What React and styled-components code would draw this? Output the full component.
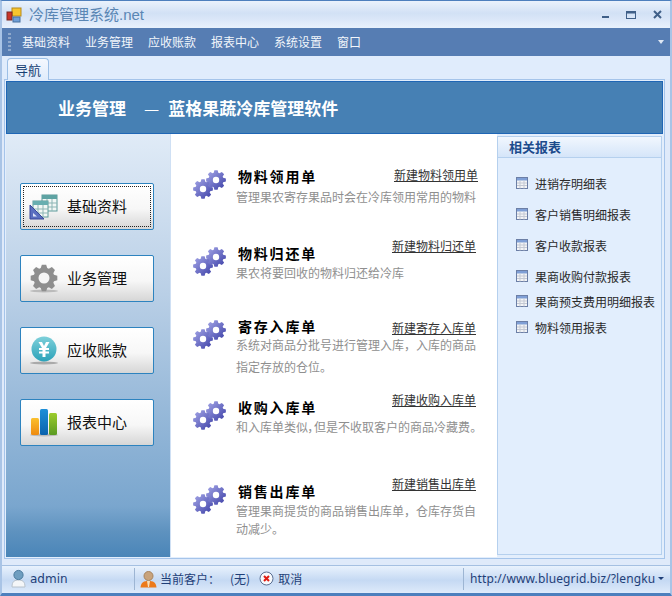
import React from "react";
import styled, { createGlobalStyle } from "styled-components";

const CJK = `"Noto Sans CJK SC", "Liberation Sans", sans-serif`;

const Global = createGlobalStyle`
  html, body { margin: 0; padding: 0; }
  body { width: 672px; height: 596px; overflow: hidden; font-family: ${CJK}; font-size: 12px; }
  * { box-sizing: border-box; }
`;

const Win = styled.div`
  width: 672px; height: 596px; display: flex; flex-direction: column;
  background: #dfeafa; border: 2px solid #4d7fbd; border-top-width: 1px; border-bottom-width: 3px;
  border-color: #4d7fbd #a9c4e6 #4d7fbd #a9c4e6;
`;
const TitleBar = styled.div`
  height: 27px; flex: none; display: flex; align-items: center; padding: 0 8px 0 4px;
  background: linear-gradient(#eaf2fc, #d2e1f5 45%, #dbe7f8 70%, #e8f1fc);
`;
const AppTitle = styled.div`
  margin-left: 7px; font-size: 15px; line-height: 26px; color: #5a86b4; flex: 1; white-space: nowrap;
  & span { font-family: "Liberation Sans", sans-serif; font-size: 15px; }
`;
const WinButtons = styled.div`display: flex; align-items: center; gap: 17px; color: #3f5f88;`;
const MenuBar = styled.div`
  height: 28px; flex: none; display: flex; align-items: center; padding: 0 6px 1px 6px;
  background: #567db3; color: #f2f6fb;
`;
const Grip = styled.div`
  width: 3px; height: 18px; margin-right: 11px; flex: none;
  background: repeating-linear-gradient(#8fa9cc 0 2px, transparent 2px 4px);
`;
const MenuItem = styled.div`margin-right: 15px; font-size: 12px; white-space: nowrap;`;
const MenuArrow = styled.div`
  margin-left: auto; width: 0; height: 0; border: 3px solid transparent; border-top: 4px solid #dfe8f4; border-bottom: 0;
`;
const TabStrip = styled.div`height: 23px; flex: none; display: flex; align-items: flex-end; padding-left: 5px; background: #e0ecfc;`;
const Tab = styled.div`
  width: 42px; height: 22px; margin-bottom: -1px; z-index: 1; text-align: center; font-size: 13px; line-height: 21px; color: #173f73;
  background: linear-gradient(#f4f8fe, #dfebfb); border: 1px solid #9cbfe6; border-bottom: 0; border-radius: 4px 4px 0 0;
`;
const Page = styled.div`
  height: 480px; flex: none; margin: 0 5px 0 2px; padding: 1px; border: 1px solid #a5c4ea;
  display: flex; flex-direction: column; background: #e3eefc;
`;
const Banner = styled.div`
  height: 53px; flex: none; display: flex; align-items: center; padding-left: 51px;
  background: #4680b4; border: 1px solid #1f66b5; color: #fff; font-size: 17px; font-weight: 700; white-space: nowrap;
`;
const BannerDash = styled.span`margin: 0 9px 0 18px; font-weight: 400;`;
const Body = styled.div`flex: 1; min-height: 0; display: flex;`;
const Side = styled.div`
  width: 165px; flex: none; padding: 49px 0 0 14px; display: flex; flex-direction: column; gap: 25px;
  background: linear-gradient(#e0ebf7, #b9cfe6 38%, #7aa6ce 88%, #5e92bf 94%, #4a85b8);
  border-right: 1px solid #cfe0f4;
`;
const NavButton = styled.div`
  position: relative; width: 134px; height: 47px; display: flex; align-items: center;
  border: 1px solid #2d83bf; border-radius: 2px; background: linear-gradient(#fff, #f7f7f7 55%, #d6d6d6);
  font-size: 15px; color: #111;
  ${(p) => p.$focus && `&::after { content: ""; position: absolute; inset: 2px; border: 1px dotted #222; }`}
`;
const NavIcon = styled.div`width: 46px; flex: none; display: flex; justify-content: center;`;
const NavLabel = styled.span`padding-bottom: 3px;`;
const Center = styled.div`flex: none; width: 326px; background: #fff; padding: 32px 20px 0 22px;`;
const Doc = styled.div`display: flex; height: ${(p) => p.$h}px;`;
const DocIcon = styled.div`width: 34px; flex: none; padding-top: 4px;`;
const DocMain = styled.div`flex: 1; min-width: 0; margin-left: 9px;`;
const DocHead = styled.div`display: flex; justify-content: space-between; align-items: flex-start; padding-left: 2px;`;
const DocTitle = styled.div`font-size: 14px; font-weight: 700; line-height: 20px; letter-spacing: 1.8px; color: #000;`;
const DocLink = styled.a`font-size: 12px; line-height: 16px; color: #333; text-decoration: underline; margin-top: ${(p) => p.$top}px; margin-right: ${(p) => p.$right}px;`;
const DocBlurb = styled.div`margin-top: ${(p) => p.$top}px;`;
const DocText = styled.div`
  font-size: 12px; line-height: ${(p) => p.$lh}px; color: #8f8f8f; white-space: nowrap;
  ${(p) => p.$tight && `font-feature-settings: "palt";`}
`;
const Related = styled.div`
  flex: 1; margin: 2px 1px 2px 0; border: 1px solid #b5d0ee; background: #e2eefd; display: flex; flex-direction: column;
`;
const RelatedHead = styled.div`
  height: 21px; flex: none; padding-left: 11px; font-size: 13px; line-height: 20px; font-weight: 700; color: #1c4b8c;
  background: linear-gradient(#f1f7fe, #d5e5f9); border-bottom: 1px solid #b5d0ee;
`;
const ReportList = styled.div`padding: 15px 0 0 18px;`;
const Report = styled.div`display: flex; align-items: center; height: 20px; margin-bottom: ${(p) => p.$gap}px; color: #2a2a2a; font-size: 12px; white-space: nowrap;`;
const ReportText = styled.span`margin-left: 7px;`;
const Status = styled.div`
  height: 27px; margin: 6px 0 1px 0; padding-bottom: 1px; flex: none; display: flex; align-items: center; color: #1f3f78;
  background: linear-gradient(#e9f2fd, #c5d9f3 55%, #dce9fa); border-top: 1px solid #a5c0e2;
`;
const UserCell = styled.div`
  width: 133px; height: 22px; flex: none; display: flex; align-items: center; gap: 4px; padding-left: 9px; border-right: 1px solid #9db5d3;
  font-family: "DejaVu Sans", sans-serif; font-size: 12px;
`;
const CustomerCell = styled.div`flex: 1; display: flex; align-items: center; padding-left: 5px; font-size: 12px; white-space: nowrap;`;
const Gap = styled.span`display: inline-block; width: ${(p) => p.$w}px; flex: none;`;
const UrlCell = styled.div`
  width: 207px; height: 22px; flex: none; display: flex; align-items: center; padding-left: 6px; border-left: 1px solid #9db5d3;
  font-family: "Noto Sans", sans-serif; font-size: 12px; letter-spacing: 0.12px; white-space: nowrap; color: #1f3f78;
`;
const UrlArrow = styled.span`margin-left: 3px; width: 0; height: 0; border: 3px solid transparent; border-top: 3px solid #1f3f78; border-bottom: 0;`;

const Logo = () => (
  <svg width="16" height="16" viewBox="0 0 16 16">
    <rect x="6" y="1" width="9" height="8" fill="#f7c52e" stroke="#b88a1a" />
    <rect x="1" y="5" width="5" height="8" fill="#c9342a" stroke="#7a2a22" />
    <rect x="7" y="10" width="7" height="5" fill="#6f9fd8" stroke="#47709f" />
  </svg>
);
const gearPath = (cx, cy, ro, ri, n) => {
  let d = "";
  for (let i = 0; i < n; i++) {
    const a = (i / n) * Math.PI * 2, w = Math.PI / n / 1.7;
    const pts = [[ri, a - w * 1.35], [ro, a - w * 0.7], [ro, a + w * 0.7], [ri, a + w * 1.35]];
    pts.forEach(([r, t], j) => {
      d += `${i === 0 && j === 0 ? "M" : "L"}${(cx + r * Math.cos(t)).toFixed(2)} ${(cy + r * Math.sin(t)).toFixed(2)}`;
    });
  }
  return d + "Z";
};
const Gears = () => (
  <svg width="34" height="30" viewBox="0 0 34 30">
    <defs>
      <linearGradient id="gg" x1="0" y1="0" x2="1" y2="1">
        <stop offset="0" stopColor="#a6a8e8" />
        <stop offset="1" stopColor="#3c3fa6" />
      </linearGradient>
    </defs>
    <path d={gearPath(10, 19, 10, 7.5, 8)} fill="url(#gg)" />
    <circle cx="10" cy="19" r="3.2" fill="#fff" />
    <path d={gearPath(23, 10, 10, 7.5, 8)} fill="url(#gg)" />
    <circle cx="23" cy="10" r="3.2" fill="#fff" />
  </svg>
);
const TablesIcon = () => (
  <svg width="30" height="26" viewBox="0 0 30 26">
    <rect x="13" y="1" width="15" height="16" fill="#f2f7f5" stroke="#5c9a9a" />
    <rect x="13" y="1" width="15" height="4" fill="#5ea3a3" />
    <path d="M13 9h15M13 13h15M18 5v12M23 5v12" stroke="#8db5b5" />
    <rect x="4" y="7" width="15" height="16" fill="#f2f7f5" stroke="#5c9a9a" />
    <rect x="4" y="7" width="15" height="4" fill="#68aeb0" />
    <path d="M4 15h15M4 19h15M9 11v12M14 11v12" stroke="#8db5b5" />
    <path d="M1 11 L1 25 L15 25Z" fill="#5a6fc0" stroke="#39479a" />
    <path d="M4 19 L4 22.5 L8 22.5Z" fill="#dfe5f7" />
  </svg>
);
const GrayGear = () => (
  <svg width="30" height="30" viewBox="0 0 30 30">
    <ellipse cx="15" cy="27" rx="14" ry="1.5" fill="#bbb" />
    <path d={gearPath(15, 14, 13.5, 10.5, 8)} fill="#8e8e8e" />
    <circle cx="15" cy="14" r="5.5" fill="#f5f5f5" />
  </svg>
);
const CoinIcon = () => (
  <svg width="30" height="30" viewBox="0 0 30 30">
    <defs>
      <linearGradient id="cg" x1="0" y1="0" x2="0" y2="1">
        <stop offset="0" stopColor="#7ed0da" />
        <stop offset="1" stopColor="#2ba2b9" />
      </linearGradient>
    </defs>
    <ellipse cx="15" cy="27" rx="14" ry="1.5" fill="#aaa" />
    <circle cx="15" cy="13" r="12.5" fill="url(#cg)" />
    <path d="M9.5 6 L13 6 L15 10 L17 6 L20.5 6 L17 12 L20 12 L20 14 L16.5 14 L16.5 15.5 L20 15.5 L20 17.5 L16.5 17.5 L16.5 21 L13.5 21 L13.5 17.5 L10 17.5 L10 15.5 L13.5 15.5 L13.5 14 L10 14 L10 12 L13 12Z" fill="#fff" />
  </svg>
);
const BarsIcon = () => (
  <svg width="30" height="30" viewBox="0 0 30 30">
    <defs>
      <linearGradient id="b1" x1="0" y1="0" x2="0" y2="1"><stop offset="0" stopColor="#fbc02d" /><stop offset="1" stopColor="#ee8a10" /></linearGradient>
      <linearGradient id="b2" x1="0" y1="0" x2="0" y2="1"><stop offset="0" stopColor="#1d8fd8" /><stop offset="1" stopColor="#0a62ad" /></linearGradient>
      <linearGradient id="b3" x1="0" y1="0" x2="0" y2="1"><stop offset="0" stopColor="#9ccc2c" /><stop offset="1" stopColor="#5a9a22" /></linearGradient>
    </defs>
    <ellipse cx="15" cy="27" rx="14" ry="1.5" fill="#bbb" />
    <rect x="2" y="10" width="8" height="17" rx="1.5" fill="url(#b1)" />
    <rect x="11" y="1" width="8" height="26" rx="1.5" fill="url(#b2)" />
    <rect x="20" y="5" width="8" height="22" rx="1.5" fill="url(#b3)" />
  </svg>
);
const SheetIcon = () => (
  <svg width="12" height="12" viewBox="0 0 12 12">
    <rect x="0.5" y="0.5" width="11" height="11" fill="#f3f4f6" stroke="#6c7fa6" />
    <rect x="1" y="1" width="10" height="2.5" fill="#7f9fd6" />
    <path d="M1 6h10M1 8.5h10M4 3.5v8M8 3.5v8" stroke="#c4c9d4" strokeWidth="1" />
  </svg>
);
const UserIcon = () => (
  <svg width="15" height="19" viewBox="0 0 15 19">
    <path d="M1 18 C1 12 4 11 7.500 11 C11 11 14 12 14 18Z" fill="#f4f6f8" stroke="#b8c2cc" />
    <circle cx="7.5" cy="6" r="4.600" fill="#6f9ec0" stroke="#4c7b9e" />
  </svg>
);
const CustomerIcon = () => (
  <svg width="17" height="18" viewBox="0 0 17 18">
    <path d="M0.500 17.500 C1 12 4 11 8.500 11 C13 11 16 12 16.500 17.500Z" fill="#ec7a1c" />
    <path d="M7 11h3l-1 6h-1z" fill="#f9e0b8" />
    <circle cx="8.500" cy="6" r="4.500" fill="#c8a37c" stroke="#a8835c" />
  </svg>
);
const CancelIcon = () => (
  <svg width="15" height="15" viewBox="0 0 15 15">
    <circle cx="7.500" cy="7.500" r="6.500" fill="#f7f9fc" stroke="#5a6f92" />
    <path d="M5 5 L10 10 M10 5 L5 10" stroke="#e01c12" strokeWidth="2" />
  </svg>
);

const navs = [
  { label: "基础资料", icon: <TablesIcon />, focus: true },
  { label: "业务管理", icon: <GrayGear /> },
  { label: "应收账款", icon: <CoinIcon /> },
  { label: "报表中心", icon: <BarsIcon /> },
];
const docs = [
  { h: 77, linkTop: 1, right: -1, blurbTop: 2, lh: 18, title: "物料领用单", link: "新建物料领用单", text: ["管理果农寄存果品时会在冷库领用常用的物料"] },
  { h: 73, linkTop: -5, right: 1, blurbTop: 1, lh: 18, title: "物料归还单", link: "新建物料归还单", text: ["果农将要回收的物料归还给冷库"] },
  { h: 81, linkTop: 4, right: 1, blurbTop: -2, lh: 22, title: "寄存入库单", link: "新建寄存入库单", text: ["系统对商品分批号进行管理入库，入库的商品", "指定存放的仓位。"] },
  { h: 84, linkTop: -5, right: 1, blurbTop: 1, lh: 18, tight: true, title: "收购入库单", link: "新建收购入库单", text: ["和入库单类似，但是不收取客户的商品冷藏费。"] },
  { h: 70, linkTop: -5, right: 1, blurbTop: 1, lh: 18, title: "销售出库单", link: "新建销售出库单", text: ["管理果商提货的商品销售出库单，仓库存货自", "动减少。"] },
];
const reports = [
  ["进销存明细表", 11], ["客户销售明细报表", 11], ["客户收款报表", 11],
  ["果商收购付款报表", 5], ["果商预支费用明细报表", 6], ["物料领用报表", 0],
];

export default function App() {
  return (
    <>
      <Global />
      <Win>
        <TitleBar>
          <Logo />
          <AppTitle>冷库管理系统<span>.net</span></AppTitle>
          <WinButtons>
            <svg width="7" height="8" viewBox="0 0 7 8"><rect y="5" width="7" height="2" fill="#3f5f88" /></svg>
            <svg width="10" height="8" viewBox="0 0 10 8"><rect x="0.500" y="0.500" width="9" height="7" fill="none" stroke="#3f5f88" /><rect width="10" height="2.500" fill="#3f5f88" /></svg>
            <svg width="9" height="9" viewBox="0 0 9 9"><path d="M1 1 L8 8 M8 1 L1 8" stroke="#3f5f88" strokeWidth="2" /></svg>
          </WinButtons>
        </TitleBar>
        <MenuBar>
          <Grip />
          {["基础资料", "业务管理", "应收账款", "报表中心", "系统设置", "窗口"].map((m) => <MenuItem key={m}>{m}</MenuItem>)}
          <MenuArrow />
        </MenuBar>
        <TabStrip><Tab>导航</Tab></TabStrip>
        <Page>
          <Banner><span>业务管理</span><BannerDash>—</BannerDash><span>蓝格果蔬冷库管理软件</span></Banner>
          <Body>
            <Side>
              {navs.map((n) => (
                <NavButton key={n.label} $focus={n.focus}>
                  <NavIcon>{n.icon}</NavIcon>
                  <NavLabel>{n.label}</NavLabel>
                </NavButton>
              ))}
            </Side>
            <Center>
              {docs.map((d) => (
                <Doc key={d.title} $h={d.h}>
                  <DocIcon><Gears /></DocIcon>
                  <DocMain>
                    <DocHead>
                      <DocTitle>{d.title}</DocTitle>
                      <DocLink $top={d.linkTop} $right={d.right}>{d.link}</DocLink>
                    </DocHead>
                    <DocBlurb $top={d.blurbTop}>
                      {d.text.map((t) => <DocText key={t} $lh={d.lh} $tight={d.tight}>{t}</DocText>)}
                    </DocBlurb>
                  </DocMain>
                </Doc>
              ))}
            </Center>
            <Related>
              <RelatedHead>相关报表</RelatedHead>
              <ReportList>
                {reports.map(([r, g]) => (
                  <Report key={r} $gap={g}><SheetIcon /><ReportText>{r}</ReportText></Report>
                ))}
              </ReportList>
            </Related>
          </Body>
        </Page>
        <Status>
          <UserCell><UserIcon />admin</UserCell>
          <CustomerCell>
            <CustomerIcon /><Gap $w={3} />当前客户：<Gap $w={10} />(无)<Gap $w={9} /><CancelIcon /><Gap $w={4} />取消
          </CustomerCell>
          <UrlCell>http://www.bluegrid.biz/?lengku<UrlArrow /></UrlCell>
        </Status>
      </Win>
    </>
  );
}
